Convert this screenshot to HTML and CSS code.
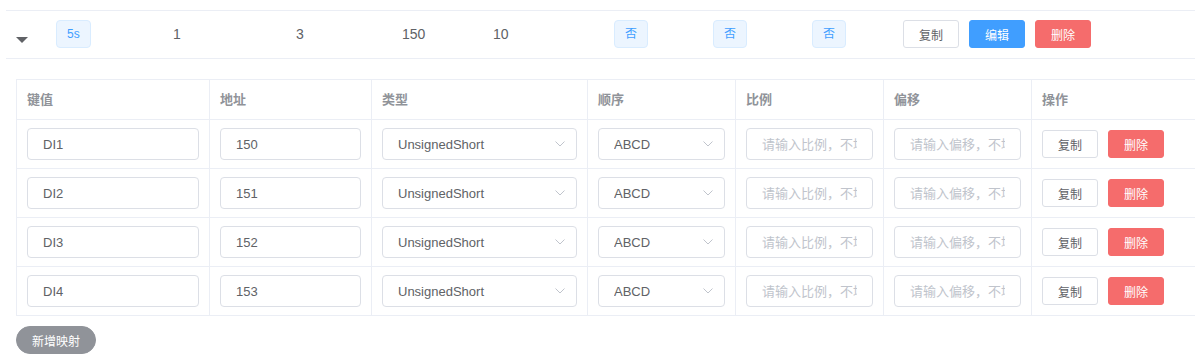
FILE: index.html
```html
<!DOCTYPE html>
<html lang="zh-CN">

<head>
    <meta charset="UTF-8">
    <meta name="viewport" content="width=device-width, initial-scale=1.0">
    <title>采集点映射</title>
    <link rel="stylesheet" href="styles.css">
</head>

<body>
    <div class="page">
        <!-- summary row -->
        <div class="main-row">
            <div class="cell expand"><span class="caret"></span></div>
            <div class="cell"><span class="tag">5s</span></div>
            <div class="cell">1</div>
            <div class="cell">3</div>
            <div class="cell">150</div>
            <div class="cell">10</div>
            <div class="cell"><span class="tag">否</span></div>
            <div class="cell"><span class="tag">否</span></div>
            <div class="cell"><span class="tag">否</span></div>
            <div class="cell">
                <button class="btn">复制</button>
                <button class="btn btn-primary">编辑</button>
                <button class="btn btn-danger">删除</button>
            </div>
        </div>

        <!-- expanded mapping table -->
        <div class="expanded">
            <div class="map-table">
                <div class="th">键值</div>
                <div class="th">地址</div>
                <div class="th">类型</div>
                <div class="th">顺序</div>
                <div class="th">比例</div>
                <div class="th">偏移</div>
                <div class="th">操作</div>

                <div class="td"><input class="input" value="DI1"></div>
                <div class="td"><input class="input" value="150"></div>
                <div class="td"><div class="select"><input class="input" value="UnsignedShort" readonly><svg class="arrow" viewBox="0 0 10 6"><path d="M0.5 0.5 L5 5 L9.5 0.5" /></svg></div></div>
                <div class="td"><div class="select"><input class="input" value="ABCD" readonly><svg class="arrow" viewBox="0 0 10 6"><path d="M0.5 0.5 L5 5 L9.5 0.5" /></svg></div></div>
                <div class="td"><input class="input" placeholder="请输入比例，不填则为1"></div>
                <div class="td"><input class="input" placeholder="请输入偏移，不填则为0"></div>
                <div class="td"><button class="btn">复制</button><button class="btn btn-danger">删除</button></div>

                <div class="td"><input class="input" value="DI2"></div>
                <div class="td"><input class="input" value="151"></div>
                <div class="td"><div class="select"><input class="input" value="UnsignedShort" readonly><svg class="arrow" viewBox="0 0 10 6"><path d="M0.5 0.5 L5 5 L9.5 0.5" /></svg></div></div>
                <div class="td"><div class="select"><input class="input" value="ABCD" readonly><svg class="arrow" viewBox="0 0 10 6"><path d="M0.5 0.5 L5 5 L9.5 0.5" /></svg></div></div>
                <div class="td"><input class="input" placeholder="请输入比例，不填则为1"></div>
                <div class="td"><input class="input" placeholder="请输入偏移，不填则为0"></div>
                <div class="td"><button class="btn">复制</button><button class="btn btn-danger">删除</button></div>

                <div class="td"><input class="input" value="DI3"></div>
                <div class="td"><input class="input" value="152"></div>
                <div class="td"><div class="select"><input class="input" value="UnsignedShort" readonly><svg class="arrow" viewBox="0 0 10 6"><path d="M0.5 0.5 L5 5 L9.5 0.5" /></svg></div></div>
                <div class="td"><div class="select"><input class="input" value="ABCD" readonly><svg class="arrow" viewBox="0 0 10 6"><path d="M0.5 0.5 L5 5 L9.5 0.5" /></svg></div></div>
                <div class="td"><input class="input" placeholder="请输入比例，不填则为1"></div>
                <div class="td"><input class="input" placeholder="请输入偏移，不填则为0"></div>
                <div class="td"><button class="btn">复制</button><button class="btn btn-danger">删除</button></div>

                <div class="td"><input class="input" value="DI4"></div>
                <div class="td"><input class="input" value="153"></div>
                <div class="td"><div class="select"><input class="input" value="UnsignedShort" readonly><svg class="arrow" viewBox="0 0 10 6"><path d="M0.5 0.5 L5 5 L9.5 0.5" /></svg></div></div>
                <div class="td"><div class="select"><input class="input" value="ABCD" readonly><svg class="arrow" viewBox="0 0 10 6"><path d="M0.5 0.5 L5 5 L9.5 0.5" /></svg></div></div>
                <div class="td"><input class="input" placeholder="请输入比例，不填则为1"></div>
                <div class="td"><input class="input" placeholder="请输入偏移，不填则为0"></div>
                <div class="td"><button class="btn">复制</button><button class="btn btn-danger">删除</button></div>
            </div>

            <button class="btn btn-info btn-round">新增映射</button>
        </div>
    </div>
</body>

</html>
```

FILE: styles.css
```css
body {
    margin: 0;
    font-family: "Liberation Sans", Arial, "Noto Sans CJK SC", sans-serif;
    font-size: 14px;
    color: #606266;
    background-color: #fff;
}

.page {
    padding: 10px 0 0 6px;
}

.main-row {
    display: grid;
    grid-template-columns: 50px 117px 123px 106px 91px 121px 99px 99px 91px 1fr;
    align-items: center;
    padding: 9px 0 10px;
    border-top: 1px solid #ebeef5;
    border-bottom: 1px solid #ebeef5;
}

.main-row .cell {
    display: flex;
    align-items: center;
}

.expand {
    padding-left: 10px;
}

.caret {
    width: 0;
    height: 0;
    margin-top: 12px;
    border-left: 6px solid transparent;
    border-right: 6px solid transparent;
    border-top: 6px solid #606266;
}

.tag {
    display: inline-block;
    height: 28px;
    line-height: 26px;
    padding: 0 10px;
    font-size: 12px;
    color: #409eff;
    background-color: #ecf5ff;
    border: 1px solid #d9ecff;
    border-radius: 4px;
    box-sizing: border-box;
}

.btn {
    height: 28px;
    padding: 0 15px;
    font-family: inherit;
    font-size: 12px;
    color: #606266;
    background-color: #fff;
    border: 1px solid #dcdfe6;
    border-radius: 3px;
    box-sizing: border-box;
    cursor: pointer;
}

.btn + .btn {
    margin-left: 10px;
}

.btn-primary {
    color: #fff;
    background-color: #409eff;
    border-color: #409eff;
}

.btn-danger {
    color: #fff;
    background-color: #f56c6c;
    border-color: #f56c6c;
}

.btn-info {
    color: #fff;
    background-color: #909399;
    border-color: #909399;
}

.btn-round {
    border-radius: 20px;
    margin-top: 10px;
}

.expanded {
    padding: 20px 0 0 10px;
}

.map-table {
    display: grid;
    grid-template-columns: 193px 162px 216px 148px 148px 148px 1fr;
    border-top: 1px solid #ebeef5;
}

.th,
.td {
    display: flex;
    align-items: center;
    padding: 8px 10px;
    border-left: 1px solid #ebeef5;
    border-bottom: 1px solid #ebeef5;
}

.th {
    line-height: 23px;
    font-size: 13px;
    font-weight: 700;
    color: #909399;
}

.input {
    width: 100%;
    height: 32px;
    padding: 0 15px;
    font-family: inherit;
    font-size: 13px;
    color: #606266;
    background-color: #fff;
    border: 1px solid #dcdfe6;
    border-radius: 4px;
    box-sizing: border-box;
    outline: none;
}

.input::placeholder {
    color: #c0c4cc;
}

.select {
    position: relative;
    width: 100%;
}

.select .input {
    padding-right: 30px;
}

.arrow {
    position: absolute;
    right: 12px;
    top: 13px;
    width: 10px;
    height: 6px;
    fill: none;
    stroke: #c0c4cc;
    stroke-width: 1;
}
```
